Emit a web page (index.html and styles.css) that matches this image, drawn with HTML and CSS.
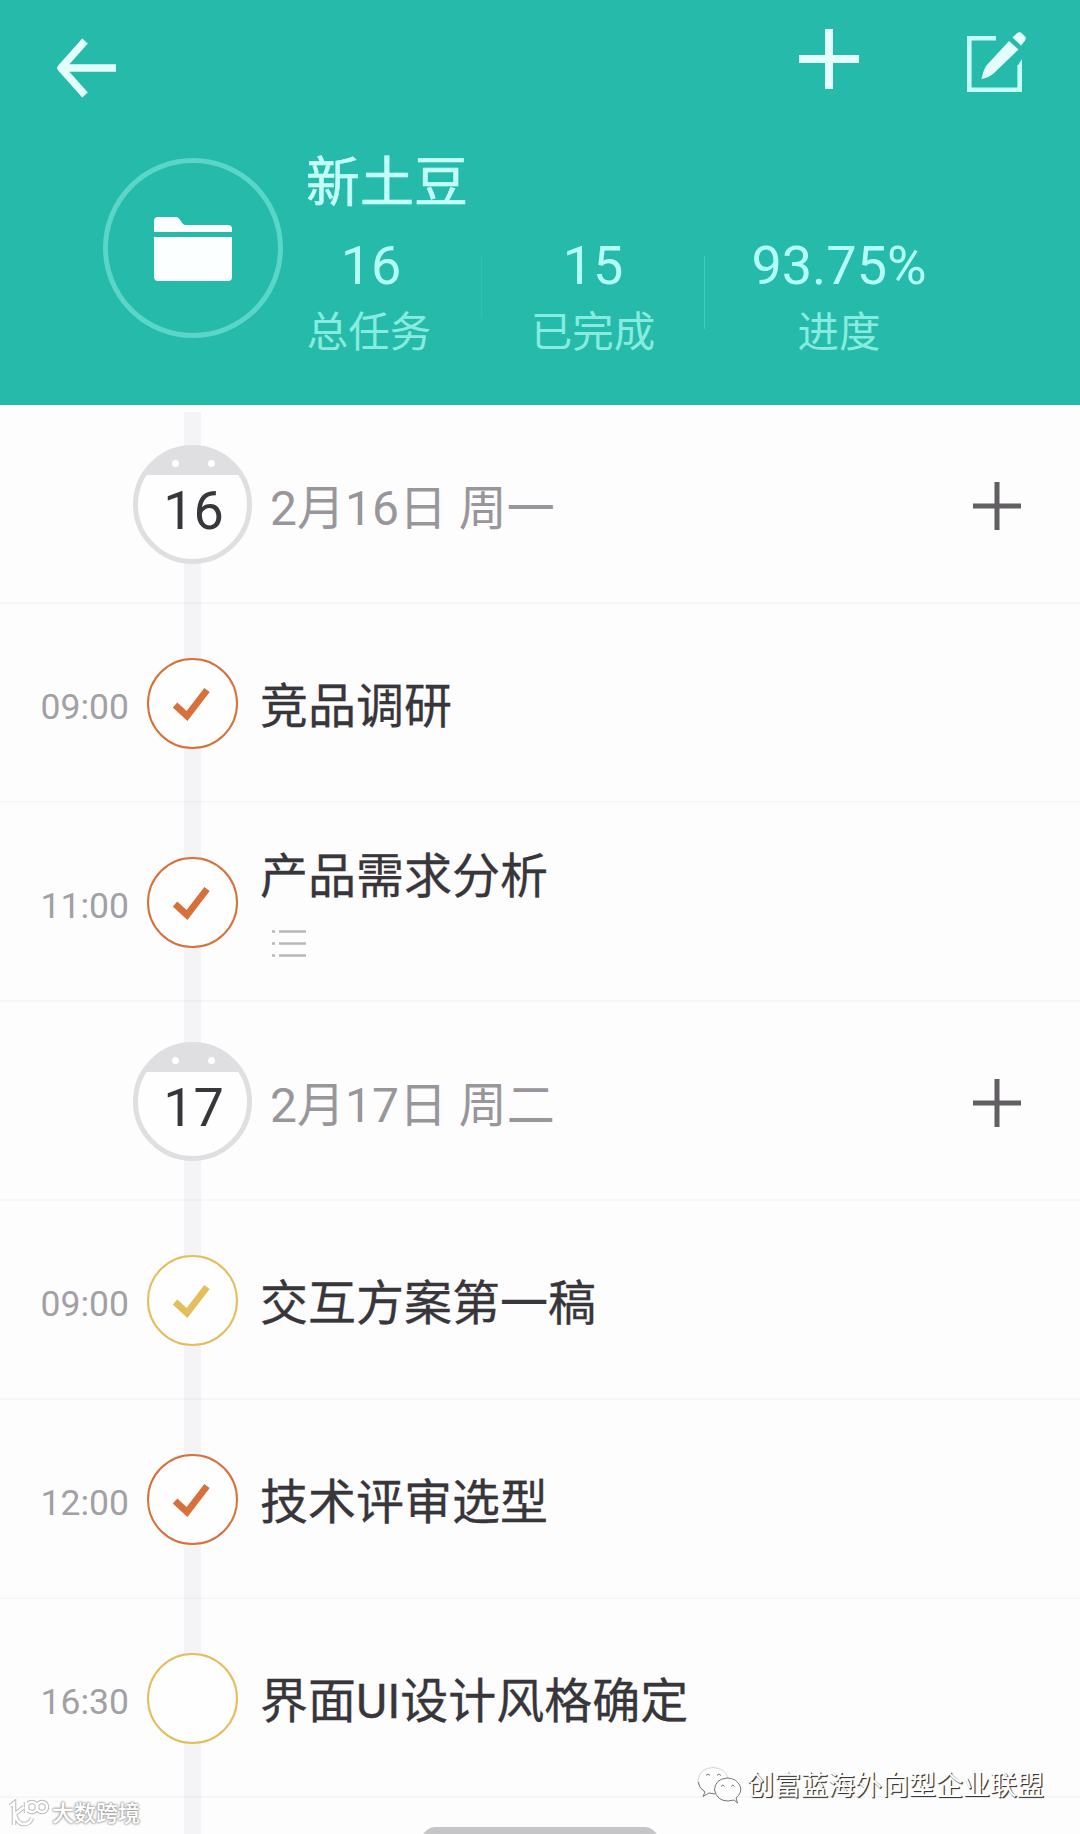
FILE: index.html
```
<!DOCTYPE html>
<html lang="zh-CN">
<head>
  <meta charset="UTF-8">
  <title>新土豆</title>
  <link rel="stylesheet" href="styles.css">
</head>

<body>

  <header>
    <div class="toolbar">
      <svg class="back" width="60" height="60" viewBox="0 0 60 60">
        <path d="M28 3 L4 30 L28 57 M5 30 H59" />
      </svg>
      <svg class="add" width="60" height="60" viewBox="0 0 60 60">
        <path d="M30 0 V60 M0 30 H60" />
      </svg>
      <svg class="edit" width="64" height="64" viewBox="0 0 64 64">
        <path class="frame" d="M32 8.3 H5.3 V59.7 H55.7 V35" />
        <path class="tip" d="M58 29 L58 36 L53.5 36 Z" />
        <path class="pencil" d="M45 11 L54.5 19.500 L29 44 Q24 48 17.500 49 Q18.500 42 22 36 Z" />
        <path class="pencil" d="M48.500 7.500 L53.500 2.800 Q56 1.500 58 3.500 L61.200 6.500 Q62.500 8.500 61 10.500 L57 15.500 Z" />
      </svg>
    </div>

    <div class="project">
      <div class="folder">
        <svg width="78" height="64" viewBox="0 0 78 64">
          <path d="M0 15 V4 Q0 0 4 0 H22 Q24 0 25 1.500 L29 7 Q30 8 32 8 H74 Q78 8 78 12 V15 Z" />
          <path d="M0 20 H78 V60 Q78 64 74 64 H4 Q0 64 0 60 Z" />
        </svg>
      </div>
      <div class="info">
        <h1>新土豆</h1>
        <div class="stats">
          <div class="stat"><b>16</b><span>总任务</span></div>
          <div class="line faint"></div>
          <div class="stat"><b>15</b><span>已完成</span></div>
          <div class="line"></div>
          <div class="stat"><b>93.75%</b><span>进度</span></div>
        </div>
      </div>
    </div>
  </header>

  <div class="timeline">
    <div class="row day">
      <div class="time"></div>
      <div class="badge"><i></i><i></i><span>16</span></div>
      <div class="date">2月16日 周一</div>
      <svg class="plus" width="48" height="48" viewBox="0 0 48 48"><path d="M24 0 V48 M0 24 H48" /></svg>
    </div>
    <div class="row">
      <div class="time">09:00</div>
      <div class="check red"><svg width="38" height="34" viewBox="0 0 38 34"><path d="M2 18 L14 29 L34 3" /></svg></div>
      <div class="task">竞品调研</div>
    </div>
    <div class="row">
      <div class="time">11:00</div>
      <div class="check red"><svg width="38" height="34" viewBox="0 0 38 34"><path d="M2 18 L14 29 L34 3" /></svg></div>
      <div class="task with-list">
        产品需求分析
        <svg class="list" width="34" height="30" viewBox="0 0 34 30">
          <path d="M7 2.500 H34 M7 14.500 H34 M7 26.500 H34" />
          <path d="M0 2.500 H3 M0 14.500 H3 M0 26.500 H3" />
        </svg>
      </div>
    </div>
    <div class="row day">
      <div class="time"></div>
      <div class="badge"><i></i><i></i><span>17</span></div>
      <div class="date">2月17日 周二</div>
      <svg class="plus" width="48" height="48" viewBox="0 0 48 48"><path d="M24 0 V48 M0 24 H48" /></svg>
    </div>
    <div class="row">
      <div class="time">09:00</div>
      <div class="check yellow"><svg width="38" height="34" viewBox="0 0 38 34"><path d="M2 18 L14 29 L34 3" /></svg></div>
      <div class="task">交互方案第一稿</div>
    </div>
    <div class="row">
      <div class="time">12:00</div>
      <div class="check red"><svg width="38" height="34" viewBox="0 0 38 34"><path d="M2 18 L14 29 L34 3" /></svg></div>
      <div class="task">技术评审选型</div>
    </div>
    <div class="row">
      <div class="time">16:30</div>
      <div class="check yellow"></div>
      <div class="task">界面UI设计风格确定</div>
    </div>
  </div>

  <div class="handle"></div>

  <div class="mark mark-left">
    <svg width="42" height="30" viewBox="0 0 42 30">
      <g class="edge">
        <path d="M2 7 L6 4 V26 M16 8 L7 15 Q9 25 16 25 Q22 25 24 19" />
        <path d="M18 3 V14" /><circle cx="24" cy="8" r="5" /><circle cx="34" cy="8" r="5" />
      </g>
      <g class="ink">
        <path d="M2 7 L6 4 V26 M16 8 L7 15 Q9 25 16 25 Q22 25 24 19" />
        <path d="M18 3 V14" /><circle cx="24" cy="8" r="5" /><circle cx="34" cy="8" r="5" />
      </g>
    </svg>
    <span>大数跨境</span>
  </div>

  <div class="mark mark-right">
    <svg width="46" height="40" viewBox="0 0 46 40">
      <path class="soft" d="M7 26 Q1 21 1 14 Q3 2 16 1.500 Q28 2 31 12" />
      <path d="M1 16 Q2 22 8 26 L6 30.500 L12 27 L18 28" />
      <path d="M37 34 L40.500 37 L39 32 Q45 27 43.500 21 Q40 12 30 12 Q18 13 17.500 24 Q20 35 31 35 Z" />
      <path d="M9 9.500 q2 -3 4 0 M20 9.500 q2 -3 4 0 M24 20.500 q2 -3 3.500 0 M34 20.500 q2 -3 3.500 0" />
    </svg>
    <span>创富蓝海外向型企业联盟</span>
  </div>

</body>
</html>
```

FILE: styles.css
```
html, body {
  margin: 0;
  padding: 0;
  height: 1834px;
  overflow: hidden;
}
body {
  position: relative;
  background: #fdfdfe;
  color: #38353b;
  font-family: Roboto, "Noto Sans CJK SC", sans-serif;
}
svg {
  display: block;
  fill: none;
}
header {
  box-sizing: border-box;
  height: 405px;
  padding: 29px 52px 0 57px;
  background: #25baaa;
}

/* top buttons */
.toolbar {
  display: flex;
  align-items: flex-start;
  height: 117px;
}
.toolbar path {
  stroke: #e4fffb;
  stroke-width: 8;
}
.toolbar .back {
  margin-top: 9px;
  margin-right: auto;
}
.toolbar .back path {
  stroke-width: 7.5;
  stroke-linejoin: round;
}
.toolbar .add {
  margin-right: 105px;
}
.toolbar .edit {
  margin-top: 1px;
}
.toolbar .edit .frame {
  stroke-width: 4.6;
  stroke: #c5fff6;
}
.toolbar .edit .pencil {
  fill: #e4fffb;
  stroke: none;
}
.toolbar .edit .tip {
  fill: #c5fff6;
  stroke: none;
}

.project {
  display: flex;
}
.folder {
  box-sizing: border-box;
  display: flex;
  align-items: center;
  justify-content: center;
  width: 180px;
  height: 180px;
  margin: 12px 23px 0 46px;
  border: 5px solid #5ad6c8;
  border-radius: 50%;
}
.folder svg {
  margin-top: 2px;
}
.folder path {
  fill: #fbffff;
}
h1 {
  margin: 0;
  padding-top: 3px;
  height: 70px;
  line-height: 70px;
  font-size: 54px;
  font-weight: 400;
  color: #c4fff7;
  -webkit-text-stroke: 0.6px #c4fff7;
}
.stats {
  display: grid;
  grid-template-columns: 126px 1px 124px 1px 170px;
  column-gap: 49px;
  margin-top: 17px;
}
.stat {
  display: flex;
  flex-direction: column;
  align-items: center;
  white-space: nowrap;
}
.stat b {
  height: 60px;
  line-height: 60px;
  font-size: 54px;
  font-weight: 400;
  color: #b4fff5;
}
.stat:first-child b {
  padding-left: 4px;
}
.stat span {
  height: 60px;
  margin-top: 7px;
  line-height: 60px;
  font-size: 41.5px;
  color: #87ecdf;
}
.line {
  height: 73px;
  margin-top: 20px;
  background: #43cabc;
}
.faint {
  height: 62px;
  background: #32c1b2;
}

/* one vertical bar runs behind every row */
.timeline {
  height: 1429px;
  background: linear-gradient(#f4f3f5, #f4f3f5) no-repeat 184px 7px / 17px 100%;
}
.row {
  box-sizing: border-box;
  display: grid;
  grid-template-columns: 129px 118px 1fr auto;
  column-gap: 5px;
  align-items: center;
  height: 199px;
  padding-right: 59px;
  background: linear-gradient(#7a707d0c, #7a707d0c) no-repeat 0 100% / 100% 2px;
}
.time {
  padding-top: 6px;
  text-align: right;
  font-size: 35.5px;
  color: #a3a0a5;
}
.badge {
  box-sizing: border-box;
  display: grid;
  grid-template-columns: 6px 6px;
  grid-template-rows: 26px 1fr;
  column-gap: 30px;
  justify-content: center;
  width: 119px;
  height: 119px;
  margin-left: -1px;
  border: 5px solid #dfdee0;
  border-radius: 50%;
  background: linear-gradient(#dfdee0 25px, #fefefe 25px);
}
.badge i {
  align-self: center;
  width: 7px;
  height: 7px;
  border-radius: 50%;
  background: #fff;
}
.badge span {
  grid-column: 1 / 3;
  justify-self: center;
  padding-left: 2px;
  line-height: 70px;
  font-size: 54px;
}
.check {
  box-sizing: border-box;
  display: flex;
  align-items: center;
  justify-content: center;
  justify-self: center;
  width: 91px;
  height: 91px;
  margin-left: -2px;
  border: 2.5px solid;
  border-radius: 50%;
  background: #fefefe;
}
.check path {
  stroke: currentColor;
  stroke-width: 6.8;
}
.red {
  color: #d8703b;
}
.yellow {
  color: #e4bd5d;
}
.date, .task {
  font-size: 48px;
  line-height: 60px;
}
.date {
  padding: 8px 0 0 13px;
  color: #99969b;
}
.task {
  grid-column: 3 / 5;
  padding: 6px 0 0 3px;
  -webkit-text-stroke: 0.3px #38353b;
}
.with-list {
  padding-top: 0;
}
.plus {
  margin-top: 2px;
}
.plus path {
  stroke: #625f63;
  stroke-width: 5;
}
.list {
  margin: 22px 0 0 12px;
}
.list path {
  stroke: #b9b7bb;
  stroke-width: 2.5;
}

.handle {
  position: absolute;
  left: 421px;
  top: 1827px;
  width: 238px;
  height: 30px;
  border-radius: 16px;
  background: #c5c4c6;
}

/* watermarks over the page */
.mark {
  position: absolute;
  display: flex;
  align-items: center;
  white-space: nowrap;
  color: #fff;
}
.mark-left {
  left: 8px;
  top: 1799px;
  gap: 2px;
  font-size: 22px;
  line-height: 30px;
  font-weight: 500;
  text-shadow: 0 0 2px #999, 0 0 2px #999, 0 0 3px #aaa;
}
.mark-left .edge {
  stroke: #bbb;
  stroke-width: 4.5;
}
.mark-left .ink {
  stroke: #fff;
  stroke-width: 2.5;
}
.mark-right {
  left: 697px;
  top: 1766px;
  gap: 4px;
  font-size: 27px;
  line-height: 40px;
  text-shadow: 1px 1px 1px #333, 1px 1px 0 #666;
}
.mark-right path {
  stroke: #777;
  stroke-width: 1;
}
.mark-right .soft {
  stroke: #d5d5d5;
}
```
